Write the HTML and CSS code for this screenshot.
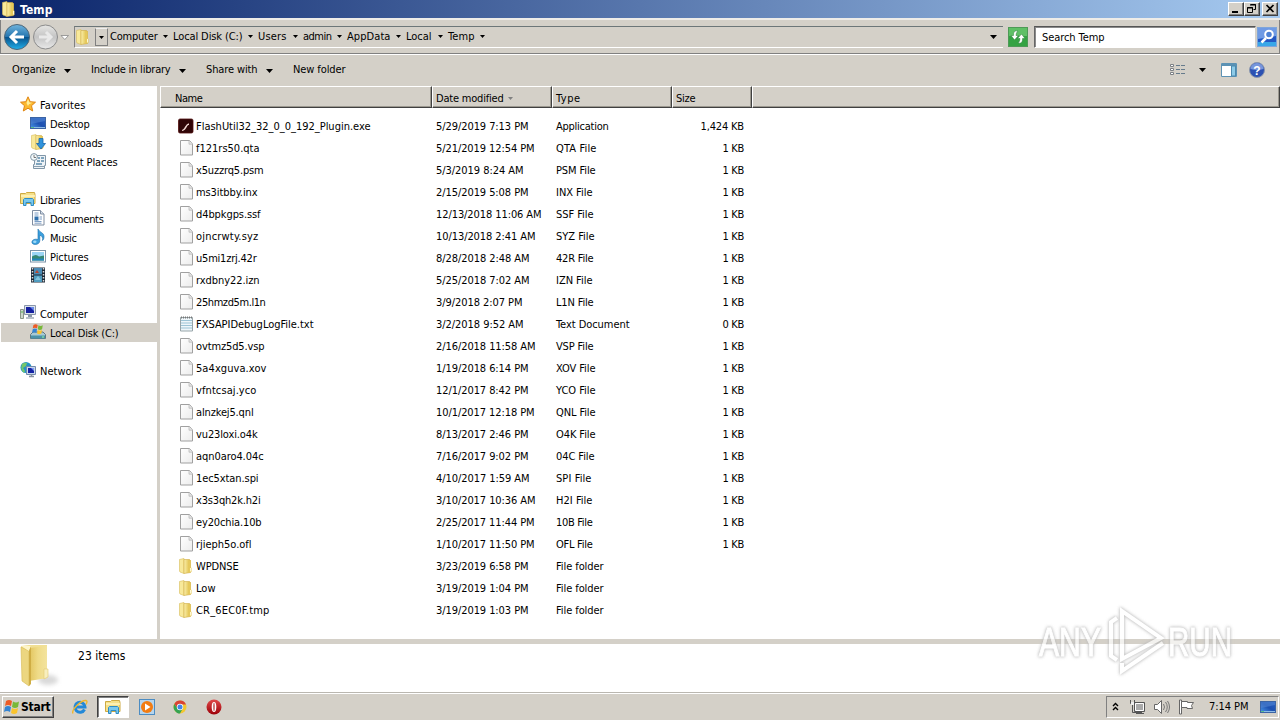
FILE: index.html
```html
<!DOCTYPE html>
<html lang="en">
<head>
<meta charset="utf-8">
<title>Temp</title>
<link rel="stylesheet" href="styles.css">
</head>
<body>
<svg class="defs" width="0" height="0">
  <defs>
    <linearGradient id="gFold" x1="0" x2="1"><stop offset="0" stop-color="#fbf0ae"/><stop offset=".45" stop-color="#edd777"/><stop offset="1" stop-color="#d9b545"/></linearGradient>
    <linearGradient id="gPage" x1="0" y1="0" x2="1" y2="1"><stop offset="0" stop-color="#fff"/><stop offset="1" stop-color="#ececec"/></linearGradient>
    <linearGradient id="gScreen" x1="0" y1="1" x2="1" y2="0"><stop offset="0" stop-color="#4b98ea"/><stop offset=".5" stop-color="#1d50b0"/><stop offset="1" stop-color="#2b62c4"/></linearGradient>
    <linearGradient id="gBlue" x1="0" y1="0" x2="0" y2="1"><stop offset="0" stop-color="#6fb4dd"/><stop offset=".48" stop-color="#2676b0"/><stop offset=".5" stop-color="#07508a"/><stop offset="1" stop-color="#22b0ea"/></linearGradient>
    <linearGradient id="gGrey" x1="0" y1="0" x2="0" y2="1"><stop offset="0" stop-color="#e6e6e4"/><stop offset=".5" stop-color="#c4c4c4"/><stop offset="1" stop-color="#e9e9e9"/></linearGradient>
    <linearGradient id="gRed" x1="0" y1="0" x2="0" y2="1"><stop offset="0" stop-color="#e04a4a"/><stop offset="1" stop-color="#9c0008"/></linearGradient>
    <linearGradient id="gBig" x1="0" x2="1"><stop offset="0" stop-color="#e2c45d"/><stop offset=".5" stop-color="#efdb88"/><stop offset="1" stop-color="#f3e39d"/></linearGradient>
  </defs>
  <symbol id="folder" viewBox="0 0 16 16"><path d="M1.500 1.500 6 .5V15.500l-4-1.500-.5-1z" fill="#f8e99a" stroke="#d8bc5c" stroke-width=".6"/><path d="M6 1.500h5.500l1 1v12L6 15.500z" fill="url(#gFold)" stroke="#d0ac44" stroke-width=".6"/><path d="M10 2.500h2.500V9l1 1v4l-3.500.6z" fill="#e6c95c"/><path d="M12.500 10v3.500" stroke="#fff8d0"/></symbol>
  <symbol id="page" viewBox="0 0 16 16"><path d="M2.500.5h9l3 3.500v11h-12z" fill="url(#gPage)" stroke="#a0a0a0"/><path d="M11 .8V4.200h3.500" fill="#e4e4e4" stroke="#bbb" stroke-width=".8"/></symbol>
  <symbol id="text" viewBox="0 0 16 16"><path d="M2.500 1.500h12v13.500h-12z" fill="#eef6fa" stroke="#98a5a9"/><path d="M3 4.500h11M3 7h11M3 9.500h11M3 12h11" stroke="#9cc4d6"/><path d="M3 1.500h11" stroke="#777" stroke-dasharray="1 1" stroke-width="2"/></symbol>
  <symbol id="flash" viewBox="0 0 16 16"><rect x=".5" y="1" width="14.500" height="14" rx="1.500" fill="#300507" stroke="#52100f" stroke-width=".8"/><path d="M4 12c2-.5 2.500-3 4-4.500 1-1.500 2-2 3-2v1.500c-1 0-1.500.5-2 1.500C8 10.500 6.500 13 4 13z" fill="#f3d9d4"/></symbol>
  <symbol id="star" viewBox="0 0 16 16"><path d="m8 .8 2.200 4.900 5.300.5-4 3.500 1.200 5.300L8 12.200 3.300 15l1.200-5.300-4-3.500 5.300-.5z" fill="#fbb92f" stroke="#e08514"/><path d="m8 3 1.500 3.500 3 .3-3.500 1.500L8 10 6.500 7z" fill="#fff09a"/></symbol>
  <symbol id="desktop" viewBox="0 0 16 16"><rect x=".5" y="2.500" width="15" height="11" fill="url(#gScreen)" stroke="#3c64a4"/><path d="M1 3h14v3L1 9z" fill="#5588d4" opacity=".55"/><path d="M1 12.500h14" stroke="#8dbbe6"/><path d="M1 12.500h3" stroke="#5cc18b"/></symbol>
  <symbol id="download" viewBox="0 0 16 16"><use href="#folder"/><path d="M9 4.500h4v5h2.500L11 15 6.500 9.500H9z" fill="#3193dc" stroke="#1765a8" stroke-width=".8"/></symbol>
  <symbol id="recent" viewBox="0 0 16 16"><path d="M4.500 2.500h11v10h-1v3h-11v-4h1z" fill="#edf2f6" stroke="#8096a8"/><path d="M8 5h2M11 5h3M7 8h3M11 8h3M6 11h6" stroke="#5b8aab" stroke-width="1.500"/><path d="M4 13.500h10" stroke="#8aa0b0"/><circle cx="4" cy="4" r="3.400" fill="#f5fafc" stroke="#8398a6"/><path d="M4 2v2.500h2" fill="none" stroke="#555" stroke-width=".8"/></symbol>
  <symbol id="library" viewBox="0 0 16 16"><path d="M.5 2.500h5l1-1h8l.5 2v9H.5z" fill="#f5e089" stroke="#ceaa42"/><path d="M1 5h14" stroke="#fff6c0" stroke-width="1.500"/><path d="M3.500 14.500v-6l1-1h8l1 1v6h-2.500v-3H6v3z" fill="#79c8ee" stroke="#2e8cc4"/></symbol>
  <symbol id="document" viewBox="0 0 16 16"><path d="M2.500.5h8l3.500 3.500v11H2.500z" fill="#fff" stroke="#7f8da1"/><path d="M10.500.5V4H14" fill="#d5e0ec" stroke="#7f8da1"/><path d="M4.500 3h4M4.500 5h4M4.500 11.500h7M4.500 13.200h7M9.500 7h2.500M9.500 9h2.500" stroke="#7c9dc4"/><path d="M4.500 6.500h4v4h-4z" fill="#2f6fab"/></symbol>
  <symbol id="music" viewBox="0 0 16 16"><path d="M8 0c1 3 6 3.500 6 7.500 0 2-.5 3-1.500 4 .8-3-.8-4.800-2.700-5.300V11.500c0 2.700-2.200 4-4.500 4-4.800 0-4.300-5 .2-5.300 1 0 1.700 0 2.500.3z" fill="#3ba0de" stroke="#176ca8" stroke-width=".6"/><ellipse cx="4.800" cy="12.700" rx="1.700" ry="1.200" fill="#9dd9f8"/></symbol>
  <symbol id="picture" viewBox="0 0 16 16"><rect x=".5" y="2.500" width="15" height="11.500" fill="#fff" stroke="#7e94a8"/><path d="M2 4h12v8.500H2z" fill="#9bd4f4"/><path d="M2 8.500q4-3 7 0l5-1v5H2z" fill="#378773"/><path d="M2 10.500h12v2H2z" fill="#2384bb"/></symbol>
  <symbol id="video" viewBox="0 0 16 16"><path d="M1 .5h14v15H1z" fill="#1c2836"/><path d="M4 1h8v6.500H4z" fill="#4b8cb6"/><path d="M4 8.500h8V15H4z" fill="#4f9cc0"/><path d="m5 6 2-3 2 3z" fill="#b9472f"/><path d="m5 13 3-4 3 4z" fill="#83c4dd"/><path d="M2.500 1v14M13.500 1v14" stroke="#ddd" stroke-width="1.500" stroke-dasharray="1.500 1.500"/></symbol>
  <symbol id="computer" viewBox="0 0 16 16"><path d="M.5 4.500h3v9h-3z" fill="#cbd5cb" stroke="#899589"/><path d="M1.500 6h1v2h-1z" fill="#55b755"/><path d="M4.500.5h11v9h-11z" fill="#dce3ec" stroke="#8996aa"/><path d="M6 2h8v6H6z" fill="#1520a0"/><path d="M10 2h4v4z" fill="#6887e8"/><path d="M8 10h4v2H8z" fill="#8896a9"/><path d="M6 13h8" stroke="#a0abb8" stroke-width="1.500"/></symbol>
  <symbol id="winflag" viewBox="0 0 16 16"><path d="M2 2q3-2 6 0L7 7Q4 5 1 7z" fill="#ec5b25"/><path d="M9 2.500q3 2 6 0L14 8q-3 2-6 0z" fill="#78b838"/><path d="M1 8q3-2 6 0l-1 5q-3-2-6 0z" fill="#3484d2"/><path d="M8 9q3 2 6 0l-1 5q-3 2-6 0z" fill="#fac42d"/></symbol>
  <symbol id="disk" viewBox="0 0 16 16"><path d="M.5 10.500 3 8h10l2.500 2.500v4H.5z" fill="#a8c9d4" stroke="#5f7780"/><path d="M1 11.500h14v3H1z" fill="#4a92a9"/><path d="M12 13h2" stroke="#9f9"/><use href="#winflag" x="2" y="-.5" width="11.500" height="11.500"/></symbol>
  <symbol id="network" viewBox="0 0 16 16"><circle cx="6" cy="5.500" r="5.500" fill="#2393c6"/><path d="M2 2q3-2 5-1L6 4 3 6l2 3-1 2Q0 8 2 2z" fill="#75c76a"/><path d="M6.500 4.500h9v8h-9z" fill="#c8d7eb" stroke="#7289ac"/><path d="M8 6h6v5H8z" fill="#1423a5"/><path d="M11 6h3v3z" fill="#7e9af1"/><path d="M9 14.500h5M11.500 12v2" stroke="#8793a2" stroke-width="1.500"/></symbol>
  <symbol id="arrow" viewBox="0 0 7 4"><path d="M0 0h7L3.500 4z" fill="currentColor"/></symbol>
</svg>

<header class="titlebar">
  <svg class="ic16"><use href="#folder"/></svg>
  <span class="title" data-w="32">Temp</span>
  <div class="winbtns">
    <span class="wbtn"><svg width="14" height="12"><path d="M3 9h6" stroke="#000" stroke-width="2"/></svg></span><span class="wbtn"><svg width="14" height="12"><path d="M5.500 1.500h5v5h-2M5 2h6M2.500 4.500h5v5h-5zM2 5h6" fill="none" stroke="#000"/></svg></span><span class="wbtn close"><svg width="14" height="12"><path d="m3.500 2 7 7m0-7-7 7" stroke="#000" stroke-width="1.700"/></svg></span>
  </div>
</header>

<nav class="navbar">
  <svg class="navbtns" width="70" height="30">
    <circle cx="17" cy="15" r="12.500" fill="url(#gBlue)" stroke="#4e6678"/><path d="M24 15H11m6-6-6 6 6 6" fill="none" stroke="#fff" stroke-width="3"/>
    <circle cx="45.500" cy="15" r="12" fill="url(#gGrey)" stroke="#8c8c8c"/><path d="M39 15h12m-5-5 5 5-5 5" fill="none" stroke="#e9e9e9" stroke-width="3"/>
    <path d="M61 13.500h7.500L64.800 17.500z" fill="#fff" stroke="#888" stroke-width=".8"/>
  </svg>
  <div class="address">
    <span class="addricon"><svg class="ic16"><use href="#folder"/></svg></span>
    <span class="adddrop"><svg class="arr5"><use href="#arrow"/></svg></span>
    <div class="crumbs">
      <span class="crumb c1"><span data-w="47">Computer</span><svg class="arr5"><use href="#arrow"/></svg></span>
      <span class="crumb c2"><span data-w="69">Local Disk (C:)</span><svg class="arr5"><use href="#arrow"/></svg></span>
      <span class="crumb c3"><span data-w="28">Users</span><svg class="arr5"><use href="#arrow"/></svg></span>
      <span class="crumb c4"><span data-w="28">admin</span><svg class="arr5"><use href="#arrow"/></svg></span>
      <span class="crumb c5"><span data-w="43">AppData</span><svg class="arr5"><use href="#arrow"/></svg></span>
      <span class="crumb c6"><span data-w="25">Local</span><svg class="arr5"><use href="#arrow"/></svg></span>
      <span class="crumb c7"><span data-w="26">Temp</span><svg class="arr5"><use href="#arrow"/></svg></span>
    </div>
    <svg class="arr7"><use href="#arrow"/></svg>
  </div>
  <svg class="refresh" width="20" height="20"><rect x=".5" y=".5" width="19" height="19" fill="#35a343" stroke="#4e9a57"/><path d="M1 1h18v8H1z" fill="#5fc066"/><path d="M10 4Q5 3 5.500 8.500H3L6.500 13l4-4.500H8Q8 5.500 10 4zM10 16q5 1 4.500-4.500H17L13.500 7l-4 4.500H12q0 3-2 4.500z" fill="#fff" stroke="#237b31" stroke-width=".5"/></svg>
  <div class="search"><span data-w="62">Search Temp</span></div>
  <svg class="find" width="20" height="20"><rect x=".5" y=".5" width="19" height="19" fill="#2358c4" stroke="#7ea5da"/><path d="M1 1h18v8L1 12z" fill="#6f9ae4"/><path d="M1 15h18v4H1z" fill="#38a7e8"/><circle cx="12" cy="7.500" r="3.800" fill="#4e81d4" stroke="#fff" stroke-width="2"/><path d="m9 11-4.500 4.500" stroke="#fff" stroke-width="2.500"/></svg>
</nav>

<div class="toolbar">
  <span class="tool t1"><span data-w="43">Organize</span><svg class="arr7"><use href="#arrow"/></svg></span>
  <span class="tool t2"><span data-w="79">Include in library</span><svg class="arr7"><use href="#arrow"/></svg></span>
  <span class="tool t3"><span data-w="51">Share with</span><svg class="arr7"><use href="#arrow"/></svg></span>
  <span class="tool"><span data-w="52">New folder</span></span>
  <div class="toolicons">
    <svg width="16" height="14"><path d="M.5 1.500h3v2h-3zM.5 5.500h3v2h-3zM.5 9.500h3v2h-3z" fill="#fff" stroke="#7c8085"/><path d="M6 2.500h4m1 0h4M6 6.500h4m1 0h4M6 10.500h4m1 0h4" stroke="#667b8c"/></svg>
    <svg class="arr7 va"><use href="#arrow"/></svg>
    <svg class="pane" width="16" height="14"><path d="M.5.5h15v13H.5z" fill="#fff" stroke="#5c92b4"/><path d="M1 2h14" stroke="#5c92b4" stroke-width="2"/><path d="M10.500 3h4v10h-4z" fill="#8dcbe8" stroke="#4b89ae"/></svg>
    <svg class="help" width="16" height="16"><circle cx="8" cy="8" r="7.500" fill="#2c51b2" stroke="#8a96ad"/><path d="M1.500 7A6.500 6 0 0 1 14.500 7Q8 9 1.500 7z" fill="#7796dc"/><text x="8" y="12.500" text-anchor="middle" class="q">?</text></svg>
  </div>
</div>

<main class="main">
  <aside class="side">
    <div class="s top"><svg class="ic16"><use href="#star"/></svg><span data-w="45">Favorites</span></div>
    <div class="s"><svg class="ic16"><use href="#desktop"/></svg><span data-w="39">Desktop</span></div>
    <div class="s"><svg class="ic16"><use href="#download"/></svg><span data-w="52">Downloads</span></div>
    <div class="s"><svg class="ic16"><use href="#recent"/></svg><span data-w="67">Recent Places</span></div>
    <div class="s top gap"><svg class="ic16"><use href="#library"/></svg><span data-w="40">Libraries</span></div>
    <div class="s"><svg class="ic16"><use href="#document"/></svg><span data-w="53">Documents</span></div>
    <div class="s"><svg class="ic16"><use href="#music"/></svg><span data-w="26">Music</span></div>
    <div class="s"><svg class="ic16"><use href="#picture"/></svg><span data-w="38">Pictures</span></div>
    <div class="s"><svg class="ic16"><use href="#video"/></svg><span data-w="31">Videos</span></div>
    <div class="s top gap"><svg class="ic16"><use href="#computer"/></svg><span data-w="47">Computer</span></div>
    <div class="s sel"><svg class="ic16"><use href="#disk"/></svg><span data-w="68">Local Disk (C:)</span></div>
    <div class="s top gap"><svg class="ic16"><use href="#network"/></svg><span data-w="41">Network</span></div>
  </aside>
  <section class="list">
    <div class="grid head">
      <span class="h name"><span data-w="27">Name</span></span><span class="h"><span data-w="67">Date modified</span><svg class="arr5 sort"><use href="#arrow"/></svg></span><span class="h"><span data-w="24">Type</span></span><span class="h"><span data-w="19">Size</span></span><span class="h"></span>
    </div>
    <div class="rows" id="rows"></div>
  </section>
</main>

<footer class="details">
  <svg class="bigfolder" width="44" height="44"><ellipse cx="30" cy="35" rx="10" ry="5" class="shade"/><path d="M3 1 11 0h18v33l-18 2z" fill="#f1df94"/><path d="M11 3 29 1v32l-18 3z" fill="url(#gBig)"/><path d="M3 2 11 6v35l-7-5z" fill="#ecd680" stroke="#d7b950" stroke-width=".6"/><path d="M3 1h10l-2 5z" fill="#fdf5c9"/><path d="M11 6l2-5v38l-2 2z" fill="#cfad45"/><path d="M26 34v-10h4v8z" fill="#f8efbe" stroke="#e2c974" stroke-width=".6"/></svg>
  <span class="count" data-w="47">23 items</span>
</footer>

<div class="watermark">
  <svg width="220" height="76">
    <g class="mark"><text x="9" y="54" textLength="62" lengthAdjust="spacingAndGlyphs">ANY</text><text x="138" y="54" textLength="64" lengthAdjust="spacingAndGlyphs">RUN</text>
    <path d="M87 16l-6 4v34l6 4M92 9v48l39-21zM92 61v8l41-28" fill="none"/></g>
  </svg>
</div>

<div class="taskbar">
  <div class="start"><svg class="ic16"><use href="#winflag"/></svg><span data-w="29">Start</span></div>
  <div class="quick">
    <svg class="ic16" viewBox="0 0 16 16"><path d="M12.500 10.500A5 5 0 1 1 13 8H4" fill="none" stroke="#2389d8" stroke-width="3"/><path d="M1 14.500C-1 11 9 1 14 1.500q2 .5 0 4" fill="none" stroke="#efb72e" stroke-width="1.400"/></svg>
    <div class="active"><svg class="ic16"><use href="#library"/></svg></div>
    <svg class="ic16" viewBox="0 0 16 16"><rect x=".5" y=".5" width="15" height="15" fill="#b6d5ed" stroke="#4c8cc2"/><circle cx="8" cy="8" r="6" fill="#f27c12"/><path d="m6 4.500 5.500 3.500L6 11.500z" fill="#fff"/></svg>
    <svg class="ic16 chrome" viewBox="0 0 16 16"><circle cx="8" cy="8" r="6.500" fill="#f3c72f"/><path d="M2.300 5A6.500 6.500 0 0 1 14 5.500H8L6 10z" fill="#d94335"/><path d="M2.300 5A6.500 6.500 0 0 0 8 14.500L10.500 10H6z" fill="#35a352"/><circle cx="8" cy="8" r="3.200" fill="#fff"/><circle cx="8" cy="8" r="2.500" fill="#4285e8"/></svg>
    <svg class="ic16" viewBox="0 0 16 16"><circle cx="8" cy="8" r="7.500" fill="url(#gRed)"/><ellipse cx="8" cy="8" rx="2.300" ry="5" fill="#fff"/><ellipse cx="8" cy="8" rx=".9" ry="4.200" fill="#c96b6b"/></svg>
  </div>
  <div class="tray">
    <svg class="chev" width="8" height="10"><path d="M1 4 3.500 1.500 6 4M1 8 3.500 5.500 6 8" fill="none" stroke="#000" stroke-width="1.400"/></svg>
    <svg width="17" height="16"><path d="M5.500 3.500h10v9h-10z" fill="#aaa" stroke="#555"/><path d="M6.500 4.500h8v7h-8z" fill="none" stroke="#fff"/><path d="M1.500 1v3.500h4V1M3.500 4v9.500H13" fill="none" stroke="#555"/><path d="M2 3h3v3H2z" fill="#eee"/><path d="M7 14.500h8" stroke="#555"/></svg>
    <svg width="18" height="16"><path d="M1.500 5.500h3l4-4v13l-4-4h-3z" fill="#fff" stroke="#666"/><path d="M10.500 5q2 3 0 6M12.500 3q3.500 5 0 10M14.500 2q4 6 0 12" fill="none" stroke="#777"/></svg>
    <svg width="17" height="16"><path d="M1.500 1h2v14h-2z" fill="#fff" stroke="#666"/><path d="M3.500 2.500h6v1h6l-2 3 1 3H9v-1H3.500z" fill="#fff" stroke="#666"/></svg>
    <span class="clock" data-w="39">7:14 PM</span>
    <svg class="ic16"><use href="#desktop"/></svg>
  </div>
</div>
<script src="app.js"></script>
</body>
</html>
```
FILE: styles.css
```css
* { box-sizing: border-box; }
body {
  margin: 0; width: 1280px; height: 720px; overflow: hidden;
  display: flex; flex-direction: column;
  background: #d4d0c8; color: #000;
  font: 11px/14px "DejaVu Sans Condensed", "DejaVu Sans", sans-serif;
  font-stretch: condensed; white-space: nowrap;
}
svg { display: block; flex: none; }
.defs { position: absolute; }
[data-w] { display: inline-block; flex: none; }
.ic16 { width: 16px; height: 16px; }
.arr5 { width: 5px; height: 3px; }
.arr7 { width: 7px; height: 4px; }

.titlebar {
  height: 18px; flex: none; display: flex; align-items: center;
  padding: 0 2px 0 1px;
  background: linear-gradient(90deg, #0a246a, #a6caf0);
}
.title { color: #fff; font-size: 12px; font-weight: bold; margin: 1px 0 0 3px; }
.winbtns { margin-left: auto; display: flex; }
.wbtn {
  width: 16px; height: 14px; background: #d4d0c8;
  border: 1px solid; border-color: #fff #404040 #404040 #fff;
  box-shadow: inset -1px -1px #808080;
}
.close { margin-left: 2px; }

.navbar {
  height: 36px; flex: none; display: flex; align-items: flex-start;
  padding: 6px 2px 0 0;
  border-top: 2px solid #eeece8; border-bottom: 1px solid #808080;
  box-shadow: 0 1px #fff, inset 1px 0 #808080, inset -1px 0 #808080;
}
.navbtns { margin: -5px 4px 0 0; padding-top: 1px; }
.address {
  width: 929px; height: 22px; display: flex; align-items: center;
  border-top: 1px solid #6c7678; border-bottom: 1px solid #fff; border-left: 1px solid #808080;
}
.addricon { width: 20px; }
.adddrop {
  width: 13px; height: 18px; display: flex; align-items: center; justify-content: center;
  border: 1px solid #808080; border-top-color: #eee;
}
.crumbs { display: flex; margin: -1px 0 0 2px; }
.crumb { display: flex; align-items: center; justify-content: space-between; }
.crumb svg { margin-right: 5px; }
.c1 { width: 63px; }
.c2 { width: 85px; }
.c3 { width: 45px; }
.c4 { width: 44px; }
.c5 { width: 59px; }
.c6 { width: 42px; }
.c7 { width: 42px; }
.address > .arr7 { margin-left: auto; margin-right: 6px; }
.refresh { margin: 1px 6px 0 5px; }
.search {
  width: 222px; height: 22px; background: #fff; padding: 4px 0 0 7px;
  border: 1px solid; border-color: #555 #d4d0c8 #fff #666;
  box-shadow: inset 1px 1px #8b8b8b;
}
.find { margin: 1px 0 0 1px; }

.toolbar {
  height: 32px; flex: none; display: flex; align-items: center; padding: 0 15px 0 12px;
  border-top: 1px solid #fff;
}
.tool { display: flex; align-items: center; justify-content: space-between; }
.t1 { width: 59px; margin-right: 20px; }
.t2 { width: 95px; margin-right: 20px; }
.t3 { width: 67px; margin-right: 20px; }
.tool > span { margin-top: -1px; }
.toolicons { margin: -1px 0 0 auto; display: flex; align-items: center; }
.va { margin-left: 13px; }
.pane { margin-left: 15px; }
.help { margin-left: 12px; }
.q { font: bold 12px "Liberation Sans", sans-serif; fill: #fff; }

.main { height: 553px; flex: none; display: flex; }
.side {
  width: 160px; background: #fff; padding: 9px 0 0 1px;
  border-right: 3px solid #d4d0c8;
}
.s { height: 19px; display: flex; align-items: center; padding-left: 29px; gap: 4px; }
.s span { padding-top: 2px; }
.s svg { margin-top: -1px; }
.top { padding-left: 19px; }
.gap { margin-top: 19px; }
.sel { background: #d4d0c8; }
.list { flex: 1; background: #fff; }
.grid { display: grid; grid-template-columns: 272px 120px 120px 80px 1fr; }
.head { height: 22px; }
.h {
  display: flex; align-items: center; padding: 3px 0 0 3px; background: #d4d0c8;
  border-top: 1px solid #fff; border-left: 1px solid #fff;
  border-right: 1px solid #404040; border-bottom: 1px solid #404040;
  box-shadow: inset -1px -1px #9b988f;
}
.h.name { padding-left: 14px; }
.sort { color: #808080; margin-left: 4px; }
.rows { padding-top: 7px; }
.row { height: 22px; align-items: center; }
.cell { padding: 1px 0 0 4px; }
.cell.file { padding-left: 18px; display: flex; align-items: center; gap: 2px; }
.file .fic { width: 16px; height: 16px; margin: -3px 0 -1px; }
.cell.size { text-align: right; padding-right: 8px; }

.details {
  height: 54px; flex: none; display: flex; background: #fff; padding-left: 18px;
  border-top: 5px solid #d4d0c8; border-bottom: 1px solid #bab7b0;
}
.count { font-size: 12px; margin: 5px 0 0 16px; }
.bigfolder { margin-top: 1px; }
.shade { fill: #d9d9d9; filter: blur(2px); }

.watermark { position: absolute; left: 1030px; top: 602px; }
.mark {
  stroke: #fff; stroke-width: 4; opacity: .7;
  filter: drop-shadow(0 0 1.5px #aaa) drop-shadow(0 0 1.5px #ccc);
}
.mark text { font: 41px "Liberation Sans Narrow", "Liberation Sans", sans-serif; fill: #fff; stroke-width: 1; }

.taskbar {
  flex: 1; display: flex; align-items: flex-start; padding: 2px 1px 0 2px;
  border-top: 1px solid #fff;
}
.start {
  width: 52px; height: 22px; display: flex; align-items: center; gap: 1px;
  padding-left: 1px; font-size: 12px; font-weight: bold;
  border: 1px solid; border-color: #fff #404040 #404040 #fff;
  box-shadow: inset -1px -1px #808080;
}
.quick { display: flex; align-items: center; margin-left: 18px; }
.active {
  width: 32px; height: 22px; background: #fff; display: flex; align-items: center; justify-content: center;
  margin: 0 10px 0 9px; border: 1px solid; border-color: #404040 #fff #fff #404040;
  box-shadow: inset 1px 1px #808080;
}
.quick > .chrome { margin: 0 18px 0 17px; }
.tray {
  width: 173px; height: 22px; margin-left: auto; display: flex; align-items: center;
  padding-left: 5px; border: 1px solid; border-color: #808080 #fff #fff #808080;
}
.tray .chev { margin-right: 9px; }
.tray svg + svg { margin-right: 7px; }
.clock { margin: 0 12px 0 7px; }
.tray .clock { margin-left: 0; padding-left: 0; margin-right: 12px; }
.tray svg:nth-of-type(4) { margin-right: 14px; }
.tray .clock { margin-left: -7px; }
.tray svg:nth-of-type(4) + .clock { margin-left: 0; margin-right: 11px; }
```
FILE: app.js
```javascript
const files = [
  ["flash", "FlashUtil32_32_0_0_192_Plugin.exe", 174, "5/29/2019 7:13 PM", 92, "Application", 52, "1,424 KB"],
  ["page", "f121rs50.qta", 63, "5/21/2019 12:54 PM", 98, "QTA File", 40, "1 KB"],
  ["page", "x5uzzrq5.psm", 67, "5/3/2019 8:24 AM", 87, "PSM File", 39, "1 KB"],
  ["page", "ms3itbby.inx", 61, "2/15/2019 5:08 PM", 92, "INX File", 36, "1 KB"],
  ["page", "d4bpkgps.ssf", 64, "12/13/2018 11:06 AM", 105, "SSF File", 37, "1 KB"],
  ["page", "ojncrwty.syz", 62, "10/13/2018 2:41 AM", 99, "SYZ File", 38, "1 KB"],
  ["page", "u5mi1zrj.42r", 60, "8/28/2018 2:48 AM", 93, "42R File", 37, "1 KB"],
  ["page", "rxdbny22.izn", 63, "5/25/2018 7:02 AM", 93, "IZN File", 36, "1 KB"],
  ["page", "25hmzd5m.l1n", 69, "3/9/2018 2:07 PM", 86, "L1N File", 37, "1 KB"],
  ["text", "FXSAPIDebugLogFile.txt", 117, "3/2/2018 9:52 AM", 87, "Text Document", 73, "0 KB"],
  ["page", "ovtmz5d5.vsp", 68, "2/16/2018 11:58 AM", 99, "VSP File", 37, "1 KB"],
  ["page", "5a4xguva.xov", 70, "1/19/2018 6:14 PM", 92, "XOV File", 39, "1 KB"],
  ["page", "vfntcsaj.yco", 60, "12/1/2017 8:42 PM", 92, "YCO File", 39, "1 KB"],
  ["page", "alnzkej5.qnl", 57, "10/1/2017 12:18 PM", 98, "QNL File", 39, "1 KB"],
  ["page", "vu23loxi.o4k", 61, "8/13/2017 2:46 PM", 92, "O4K File", 39, "1 KB"],
  ["page", "aqn0aro4.04c", 67, "7/16/2017 9:02 PM", 92, "04C File", 38, "1 KB"],
  ["page", "1ec5xtan.spi", 62, "4/10/2017 1:59 AM", 93, "SPI File", 35, "1 KB"],
  ["page", "x3s3qh2k.h2i", 64, "3/10/2017 10:36 AM", 99, "H2I File", 36, "1 KB"],
  ["page", "ey20chia.10b", 65, "2/25/2017 11:44 PM", 98, "10B File", 36, "1 KB"],
  ["page", "rjieph5o.ofl", 55, "1/10/2017 11:50 PM", 98, "OFL File", 36, "1 KB"],
  ["folder", "WPDNSE", 42, "3/23/2019 6:58 PM", 92, "File folder", 47, ""],
  ["folder", "Low", 19, "3/19/2019 1:04 PM", 92, "File folder", 47, ""],
  ["folder", "CR_6EC0F.tmp", 73, "3/19/2019 1:03 PM", 92, "File folder", 47, ""]
];

document.getElementById("rows").innerHTML = files.map(([icon, name, nw, date, dw, type, tw, size]) => `
  <div class="grid row">
    <span class="cell file"><svg class="fic"><use href="#${icon}"/></svg><span data-w="${nw}">${name}</span></span>
    <span class="cell"><span data-w="${dw}">${date}</span></span>
    <span class="cell"><span data-w="${tw}">${type}</span></span>
    <span class="cell size">${size && `<span data-w="${size.length > 4 ? 43 : 21}">${size}</span>`}</span>
  </div>`).join("");

// Tighten the tracking so each label takes its intended width.
document.querySelectorAll("[data-w]").forEach(el => {
  const extra = Number(el.dataset.w) + 0.5 - el.getBoundingClientRect().width;
  el.style.letterSpacing = (extra / el.textContent.length).toFixed(3) + "px";
});
```
